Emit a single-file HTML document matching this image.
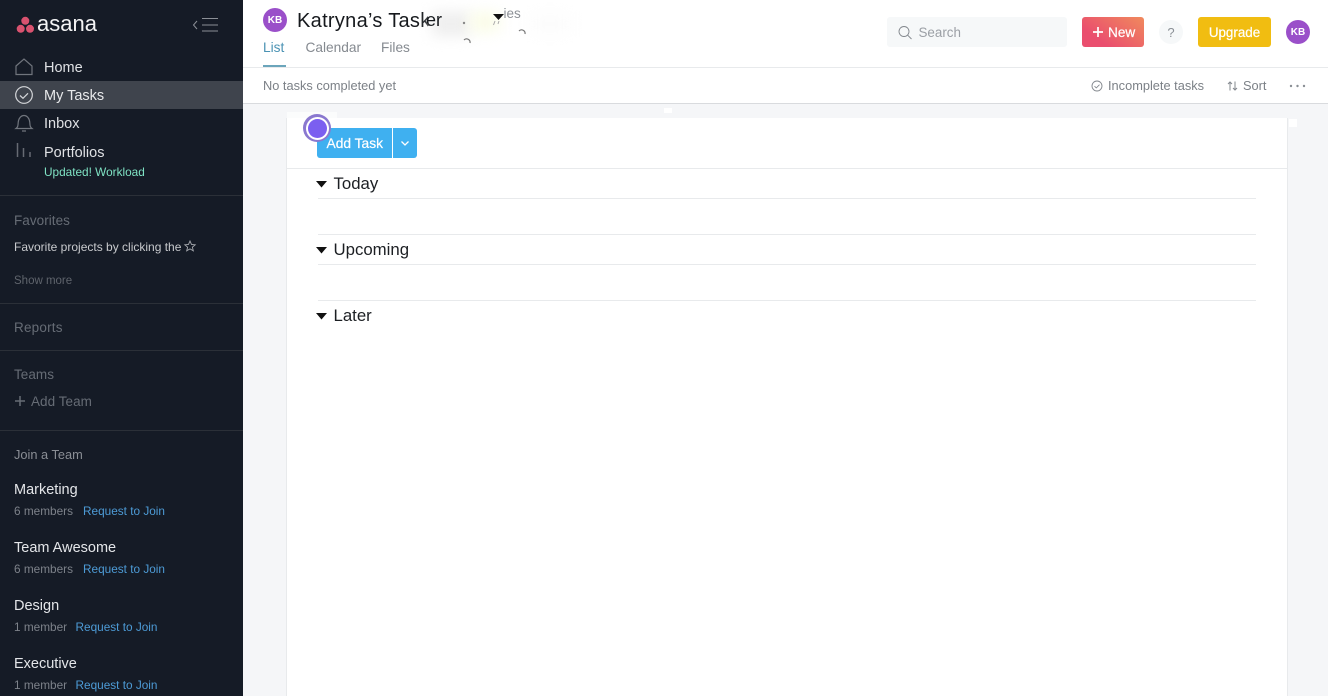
<!DOCTYPE html>
<html><head><meta charset="utf-8"><style>
html,body{margin:0;padding:0;width:1328px;height:696px;overflow:hidden;background:#f5f6f8;font-family:"Liberation Sans",sans-serif}
.t{position:absolute;white-space:nowrap;line-height:18px}
.a{position:absolute}
svg{position:absolute;overflow:visible}
.n{font-size:14.500px;color:#dfe1e4;left:44px}
.h{font-size:13.500px;color:#666c75;left:14px;letter-spacing:.05px}
.tm{font-size:14.500px;color:#e4e6e9;left:14px}
.m{font-size:11.800px;color:#7d828a;left:14px}
.r{font-size:11.800px;color:#4d9bd6}
.d{position:absolute;left:0;width:243px;height:1px;background:#2b3038}
.sec{font-size:16.800px;color:#1c1f23;left:333.500px}
.ln{position:absolute;left:318px;width:938px;height:1px;background:#e8eaec}
.g{font-size:12.800px;color:#7c8187}
.tab{font-size:13.700px;color:#858a90}
.w{-webkit-text-stroke:.2px #fff}
</style></head><body>
<div class="a" style="left:0;top:0;width:243px;height:696px;background:#151b26"></div>
<div class="a" style="left:0;top:81px;width:243px;height:28px;background:#3f444d"></div>
<svg style="left:0;top:0" width="243" height="190">
<circle cx="25.300" cy="20.800" r="4" fill="#d9526f"/><circle cx="20.700" cy="28.800" r="4" fill="#d9526f"/><circle cx="30" cy="28.800" r="4" fill="#d9526f"/>
<path d="M197 21l-3.500 4 3.500 4" fill="none" stroke="#8b8f96" stroke-width="1"/><path d="M202 18.500h16M202 25h16M202 31h16" stroke="#8b8f96" stroke-width="1"/>
<path d="M16 66l8-7 8 7v8.500h-16z" fill="none" stroke="#70757d" stroke-width="1.200"/>
<circle cx="24" cy="95" r="8.300" fill="none" stroke="#d5d7da" stroke-width="1.200"/><path d="M20 95.500l3 2.800 5-5" fill="none" stroke="#d5d7da" stroke-width="1.200"/>
<path d="M16 128.500c2-1.500 2-3 2.200-6 .3-4 2.700-7 5.800-7s5.500 3 5.800 7c.2 3 .2 4.500 2.200 6zM22 131h4" fill="none" stroke="#70757d" stroke-width="1.200"/>
<path d="M17.500 143v14M23.500 148v9M30 152v5" stroke="#666b73" stroke-width="1.500"/>
</svg>
<div class="t" style="left:37px;top:15px;font-size:22px;letter-spacing:0;color:#f4f4f5">asana</div>
<div class="t n" style="top:59px">Home</div>
<div class="t n" style="top:87px;color:#e8e9eb">My Tasks</div>
<div class="t n" style="top:115px">Inbox</div>
<div class="t n" style="top:144px">Portfolios</div>
<div class="t" style="left:44px;top:163px;font-size:11.800px;color:#7fe3c4">Updated! Workload</div>
<div class="d" style="top:195px"></div>
<div class="t h" style="top:212px">Favorites</div>
<div class="t" style="left:14px;top:238px;font-size:12px;color:#c8cacd">Favorite projects by clicking the</div>
<svg style="left:184px;top:240px" width="13" height="13"><path d="M6 1l1.500 3.400 3.700.4-2.800 2.400.9 3.600L6 8.900l-3.300 1.900.9-3.600L.8 4.800l3.700-.4z" fill="none" stroke="#a9acb1" stroke-width=".9"/></svg>
<div class="t" style="left:14px;top:272px;font-size:11.500px;color:#5f646c">Show more</div>
<div class="d" style="top:303px"></div>
<div class="t h" style="top:319px;letter-spacing:.2px">Reports</div>
<div class="d" style="top:350px"></div>
<div class="t h" style="top:366px">Teams</div>
<svg style="left:15px;top:396px" width="10" height="10"><path d="M5 0v10M0 5h10" stroke="#666c75" stroke-width="1.500"/></svg>
<div class="t h" style="left:31px;top:393px">Add Team</div>
<div class="d" style="top:430px"></div>
<div class="t" style="left:14px;top:446px;font-size:12.800px;color:#8a8e95">Join a Team</div>
<div class="t tm" style="top:481px">Marketing</div>
<div class="t m" style="top:502px">6 members</div><div class="t r" style="left:83px;top:502px">Request to Join</div>
<div class="t tm" style="top:539px">Team Awesome</div>
<div class="t m" style="top:560px">6 members</div><div class="t r" style="left:83px;top:560px">Request to Join</div>
<div class="t tm" style="top:597px">Design</div>
<div class="t m" style="top:618px">1 member</div><div class="t r" style="left:75.500px;top:618px">Request to Join</div>
<div class="t tm" style="top:655px">Executive</div>
<div class="t m" style="top:676px">1 member</div><div class="t r" style="left:75.500px;top:676px">Request to Join</div>

<div class="a" style="left:243px;top:0;width:1085px;height:104px;background:#fff;border-bottom:1px solid #d9dbde;box-sizing:border-box"></div>
<div class="a" style="left:243px;top:67px;width:1085px;height:1px;background:#e8eaec"></div>
<div class="a" style="left:263px;top:8px;width:24px;height:24px;border-radius:50%;background:#9a4fc9;color:#fff;font-size:10px;font-weight:bold;line-height:25px;text-align:center">KB</div>
<div class="t" style="left:297px;top:9px;width:131px;overflow:hidden;font-size:20px;line-height:24px;color:#16191d;letter-spacing:.3px">Katryna’s Task</div>
<div class="a" style="left:432px;top:12px;width:38px;height:24px;background:#eeeeee;filter:blur(7px)"></div>
<div class="a" style="left:470px;top:12px;width:30px;height:20px;background:#fafce8;filter:blur(7px)"></div>
<div class="a" style="left:530px;top:14px;width:40px;height:20px;background:#fcfcfc;filter:blur(7px)"></div>
<div class="t" style="left:426px;top:8px;font-size:18px;line-height:24px;color:#16191d">er</div>
<div class="t" style="left:503.500px;top:5px;font-size:13.500px;color:#8d9197">ies</div>
<svg style="left:420px;top:0" width="120" height="50">
<path d="M73 14h11l-5.500 6z" fill="#111"/>
<path d="M44 40a3.500 3.500 0 0 1 6 3M99 31a3.500 3.500 0 0 1 6 3" fill="none" stroke="#777" stroke-width="1.200"/>
<circle cx="44" cy="23" r="1.200" fill="#888"/><path d="M8 23v3" stroke="#444" stroke-width="1"/>
<path d="M75 21l-1.500 4M79 21l-1 3" stroke="#aaa" stroke-width="1"/>
</svg>
<div class="t tab" style="left:263px;top:39px;color:#4b93b4">List</div>
<div class="t tab" style="left:305.500px;top:39px">Calendar</div>
<div class="t tab" style="left:381px;top:39px">Files</div>
<div class="a" style="left:263px;top:65px;width:23px;height:2px;background:#6ba5bb"></div>
<div class="t g" style="left:263px;top:77px">No tasks completed yet</div>

<div class="a" style="left:887px;top:17px;width:180px;height:30px;border-radius:3px;background:#f6f8f9"></div>
<svg style="left:898px;top:26px" width="16" height="16"><circle cx="6" cy="5.500" r="5" fill="none" stroke="#82878d" stroke-width=".9"/><path d="M9.800 9.300l3.700 3.700" stroke="#82878d" stroke-width=".9"/></svg>
<div class="t" style="left:918.500px;top:24px;font-size:13.400px;color:#9b9fa5">Search</div>
<div class="a" style="left:1082px;top:17px;width:62px;height:30px;border-radius:3px;background:linear-gradient(35deg,#ea4e6e 25%,#f08a5d)"></div>
<svg style="left:1093px;top:27px" width="12" height="10"><path d="M5 0v10M0 5h10" stroke="#fff" stroke-width="1.700"/></svg>
<div class="t w" style="left:1108px;top:24px;font-size:13.600px;color:#fff">New</div>
<div class="a" style="left:1159px;top:20px;width:24px;height:24px;border-radius:50%;background:#f6f8f9;color:#8b9096;font-size:13px;line-height:25px;text-align:center">?</div>
<div class="a w" style="left:1198px;top:17px;width:73px;height:30px;border-radius:3px;background:#f1bd11;color:#fff;font-size:13.400px;line-height:32px;text-align:center">Upgrade</div>
<div class="a" style="left:1286px;top:20px;width:24px;height:24px;border-radius:50%;background:#9a4fc9;color:#fff;font-size:10px;font-weight:bold;line-height:25px;text-align:center">KB</div>

<svg style="left:1091px;top:80px" width="12" height="12"><circle cx="6" cy="6" r="5" fill="none" stroke="#83888e" stroke-width=".9"/><path d="M3.500 6.200l1.800 1.700 3.200-3.200" fill="none" stroke="#83888e" stroke-width=".9"/></svg>
<div class="t g" style="left:1108px;top:77px">Incomplete tasks</div>
<svg style="left:1227px;top:81px" width="11" height="10"><path d="M3 9.500V1M1 3l2-2 2 2M8 .5V9M6 7l2 2 2-2" fill="none" stroke="#83888e" stroke-width="1"/></svg>
<div class="t g" style="left:1243px;top:77px">Sort</div>
<svg style="left:1289px;top:84px" width="17" height="4"><circle cx="2" cy="2" r="1.200" fill="#8a8f95"/><circle cx="8.500" cy="2" r="1.200" fill="#8a8f95"/><circle cx="15" cy="2" r="1.200" fill="#8a8f95"/></svg>

<div class="a" style="left:286px;top:118px;width:1002px;height:578px;background:#fff;border-left:1px solid #e8eaec;border-right:1px solid #e8eaec;box-sizing:border-box"></div>
<div class="a" style="left:1289px;top:119px;width:8px;height:8px;background:#fff"></div>
<div class="a" style="left:664px;top:108px;width:8px;height:5px;background:#fff"></div>
<div class="a" style="left:287px;top:112px;width:50px;height:6px;background:#fbfcfc"></div>
<div class="a" style="left:287px;top:168px;width:1000px;height:1px;background:#e8eaec"></div>

<div class="a" style="left:317px;top:128px;width:75px;height:30px;border-radius:3px 0 0 3px;background:#3fb0f0"></div>
<div class="t w" style="left:326.500px;top:135px;font-size:13.800px;color:#fff">Add Task</div>
<div class="a" style="left:393px;top:128px;width:24px;height:30px;border-radius:0 3px 3px 0;background:#3fb0f0"></div>
<svg style="left:401px;top:141px" width="8" height="5"><path d="M.5.500L4 4l3.500-3.500" fill="none" stroke="#fff" stroke-width="1.300"/></svg>
<div class="a" style="left:303px;top:114px;width:28px;height:28px;border-radius:50%;background:#8a78cf"></div>
<div class="a" style="left:305.500px;top:116.500px;width:23px;height:23px;border-radius:50%;background:#fff"></div>
<div class="a" style="left:307.500px;top:118.500px;width:19px;height:19px;border-radius:50%;background:#7b5ff0"></div>

<svg style="left:316px;top:181px" width="11" height="7"><path d="M0 0h11l-5.500 6.500z" fill="#111"/></svg>
<div class="t sec" style="top:175px">Today</div>
<div class="ln" style="top:198px"></div>
<div class="ln" style="top:234px"></div>
<svg style="left:316px;top:247px" width="11" height="7"><path d="M0 0h11l-5.500 6.500z" fill="#111"/></svg>
<div class="t sec" style="top:241px">Upcoming</div>
<div class="ln" style="top:264px"></div>
<div class="ln" style="top:300px"></div>
<svg style="left:316px;top:313px" width="11" height="7"><path d="M0 0h11l-5.500 6.500z" fill="#111"/></svg>
<div class="t sec" style="top:307px">Later</div>
</body></html>
